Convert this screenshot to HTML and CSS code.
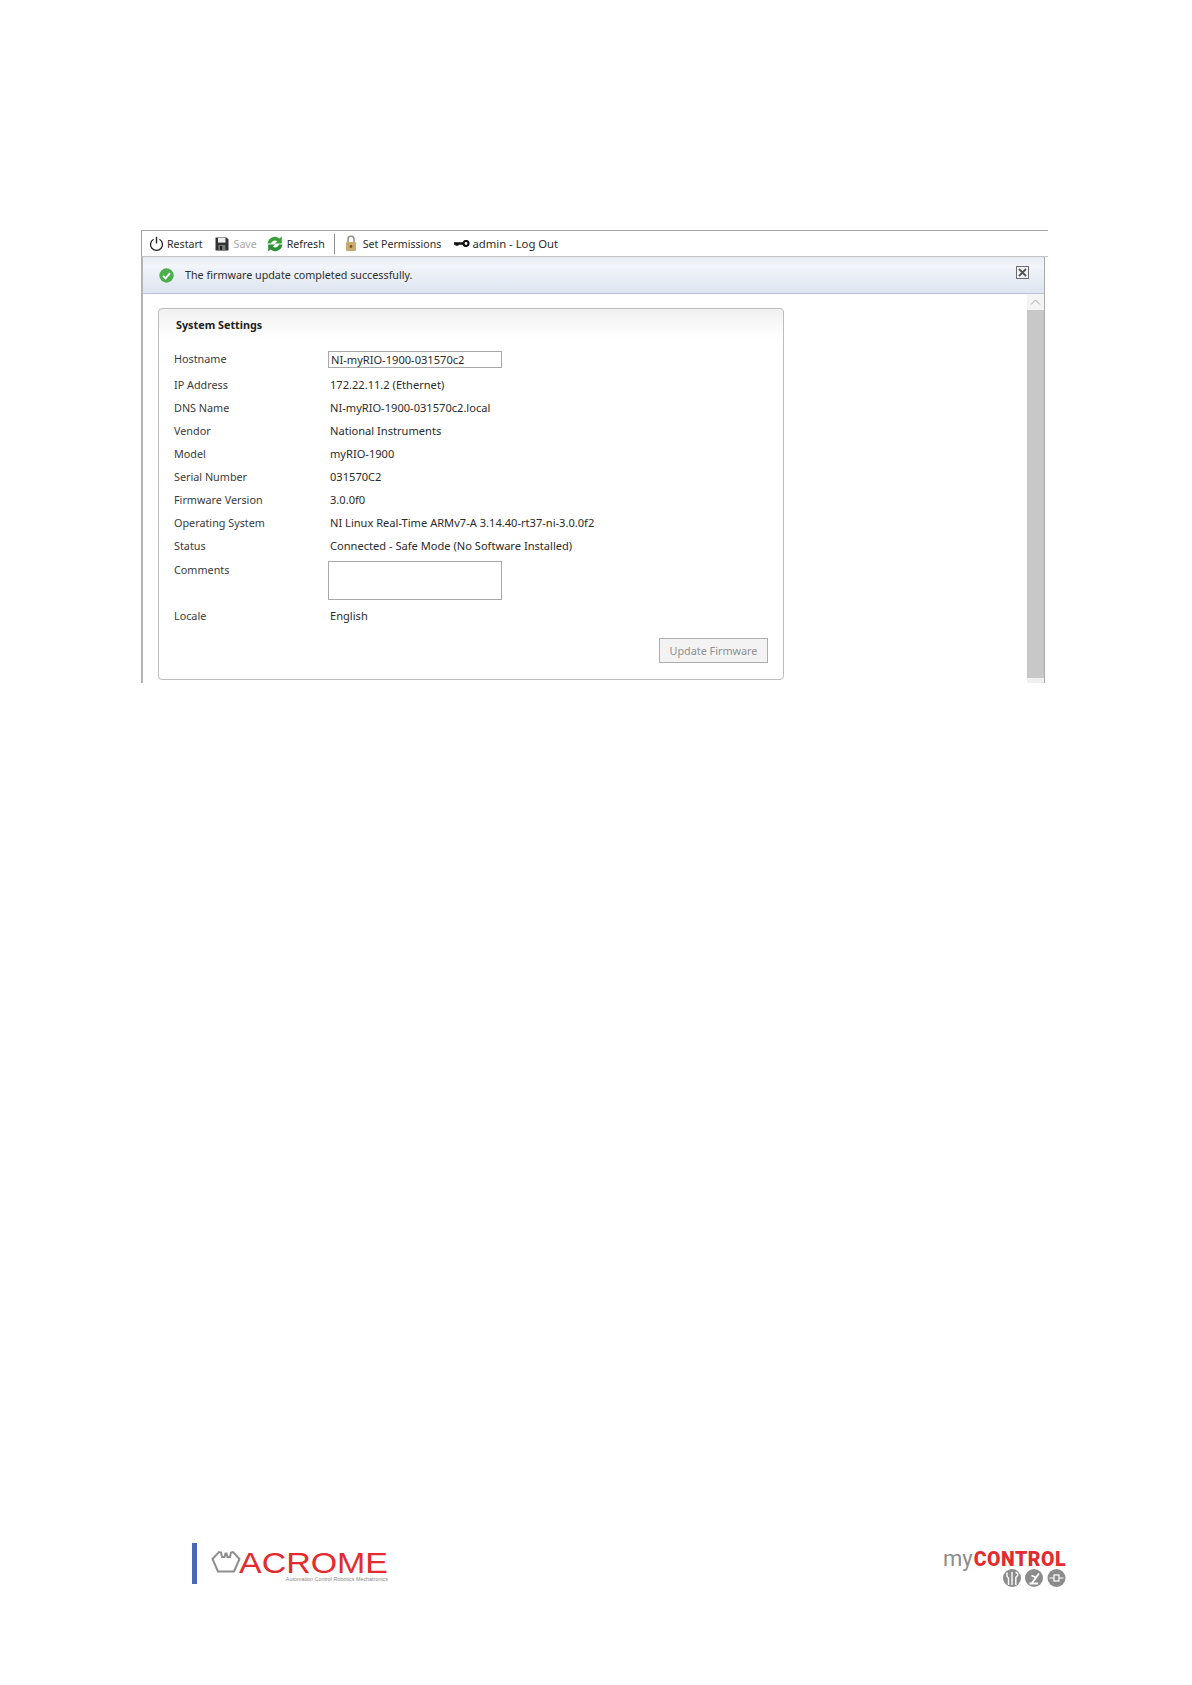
FILE: index.html
```html
<!DOCTYPE html>
<html lang="en">
<head>
<meta charset="utf-8">
<title>System Settings</title>
<link rel="stylesheet" href="styles.css">
</head>
<body>
<div class="page">
  <section class="window">
    <div class="toolbar">
      <span class="tool tool-restart">
        <svg class="icon" width="15" height="16" viewBox="0 0 15 16"><path d="M4.6 3.2A6 6 0 1 0 10.4 3.2" fill="none" stroke="#222" stroke-width="1.3"/><path d="M7.5 0.8V7.4" stroke="#222" stroke-width="1.4"/></svg>
        Restart
      </span>
      <span class="tool tool-save disabled">
        <svg class="icon" width="14" height="14" viewBox="0 0 14 14"><path d="M0.5 0.5H11.5L13.5 2.5V13.5H0.5Z" fill="#333"/><rect x="3" y="1" width="7.5" height="4.6" fill="#eee"/><rect x="3.4" y="8" width="7" height="5.5" fill="#777"/><rect x="5" y="9" width="2" height="4" fill="#222"/></svg>
        Save
      </span>
      <span class="tool tool-refresh">
        <svg class="icon" width="16" height="16" viewBox="0 0 16 16"><path d="M0.6 7.4A7.2 7.2 0 0 1 12.4 2.6L14.8 0.4V7.4H8L10.2 5.2A4 4 0 0 0 4 7.4Z" fill="#3aa13a"/><path d="M15.4 8.6A7.2 7.2 0 0 1 3.6 13.4L1.2 15.6V8.6H8L5.8 10.8A4 4 0 0 0 12 8.6Z" fill="#2c8f35"/></svg>
        Refresh
      </span>
      <span class="separator"></span>
      <span class="tool tool-lock">
        <svg class="icon" width="12" height="17" viewBox="0 0 12 17"><path d="M3 7V4.2a3 3 0 0 1 6 0V7" fill="none" stroke="#8d8d86" stroke-width="1.5"/><rect x="1" y="7" width="10" height="9" rx="1" fill="#c9ab72"/><circle cx="6" cy="11.5" r="1.4" fill="#6d5428"/></svg>
        Set Permissions
      </span>
      <span class="tool tool-user">
        <svg class="icon" width="16" height="7" viewBox="0 0 16 7"><path d="M0 2.2H9V4.8H4.5V5.8H1.5V4.8H0Z" fill="#111"/><circle cx="12" cy="3.5" r="2.5" fill="none" stroke="#111" stroke-width="2.2"/></svg>
        admin - Log Out
      </span>
    </div>
    <div class="body">
      <div class="banner">
        <svg class="check" width="15" height="15" viewBox="0 0 15 15"><circle cx="7.5" cy="7.5" r="7.2" fill="#4cae4c"/><path d="M4 7.8L6.6 10.4L11 5.2" fill="none" stroke="#fff" stroke-width="1.9"/></svg>
        <span class="banner-text">The firmware update completed successfully.</span>
        <svg class="close" width="13" height="13" viewBox="0 0 13 13"><rect x="0.5" y="0.5" width="12" height="12" fill="#f1f3f6" stroke="#6b6b6b"/><path d="M3 3L10 10M10 3L3 10" stroke="#555" stroke-width="1.8"/></svg>
      </div>
      <div class="content">
        <div class="main">
          <div class="panel">
            <h2 class="panel-title">System Settings</h2>
            <div class="rows">
              <div class="row row-host"><span class="label">Hostname</span><span class="input input-host">NI-myRIO-1900-031570c2</span></div>
              <div class="row"><span class="label">IP Address</span><span class="value">172.22.11.2 (Ethernet)</span></div>
              <div class="row"><span class="label">DNS Name</span><span class="value">NI-myRIO-1900-031570c2.local</span></div>
              <div class="row"><span class="label">Vendor</span><span class="value">National Instruments</span></div>
              <div class="row"><span class="label">Model</span><span class="value">myRIO-1900</span></div>
              <div class="row"><span class="label">Serial Number</span><span class="value">031570C2</span></div>
              <div class="row"><span class="label">Firmware Version</span><span class="value">3.0.0f0</span></div>
              <div class="row"><span class="label">Operating System</span><span class="value">NI Linux Real-Time ARMv7-A 3.14.40-rt37-ni-3.0.0f2</span></div>
              <div class="row"><span class="label">Status</span><span class="value">Connected - Safe Mode (No Software Installed)</span></div>
              <div class="row row-comments"><span class="label">Comments</span><span class="input input-comments"></span></div>
              <div class="row"><span class="label">Locale</span><span class="value">English</span></div>
            </div>
            <div class="actions"><span class="button">Update Firmware</span></div>
          </div>
        </div>
        <div class="scrollbar">
          <div class="scroll-up"><svg width="11" height="6" viewBox="0 0 11 6"><path d="M1 5.5L5.5 1L10 5.5" fill="none" stroke="#a8a8a8" stroke-width="1"/></svg></div>
          <div class="scroll-thumb"></div>
          <div class="scroll-down"></div>
        </div>
      </div>
    </div>
  </section>
  <footer class="footer">
    <div class="acrome">
      <span class="acrome-bar"></span>
      <svg class="crown" width="30" height="23" viewBox="0 0 30 23"><path d="M1.5 9L8 2L10 2.5L11 7H13.5L14.5 3.5L15.5 3.5L16.5 7H19L20 2.5L22 2L28.5 9L23 21.5H7Z" fill="none" stroke="#8e8e8e" stroke-width="2"/></svg>
      <div class="acrome-word">
        <span class="acrome-name">ACROME</span>
        <span class="acrome-sub">Automation Control Robotics Mechatronics</span>
      </div>
    </div>
    <div class="mycontrol">
      <div class="mycontrol-word"><span class="my">my</span><span class="control">CONTROL</span></div>
      <div class="badges">
        <svg width="18" height="18" viewBox="0 0 18 18"><circle cx="9" cy="9" r="9" fill="#8c8c8c"/><path d="M4 3.5V7.5L5.5 9V16M9 3V16M12.5 3.5A2 2 0 0 1 14.5 6.5L12.8 8.5V16" fill="none" stroke="#fff" stroke-width="1.4"/></svg>
        <svg width="18" height="18" viewBox="0 0 18 18"><circle cx="9" cy="9" r="9" fill="#8c8c8c"/><path d="M4.5 14.5H13M7 14L11 8.5L6.5 6.5M11 8.5L14 4.5" fill="none" stroke="#fff" stroke-width="1.8"/></svg>
        <svg width="19" height="18" viewBox="0 0 19 18"><circle cx="9.5" cy="9" r="9" fill="#8c8c8c"/><path d="M2.5 9H7M12 9H16.5" stroke="#fff" stroke-width="1.1"/><rect x="7" y="6" width="5" height="6" fill="none" stroke="#fff" stroke-width="1.2"/></svg>
      </div>
    </div>
  </footer>
</div>
</body>
</html>
```
FILE: styles.css
```css
* { box-sizing: border-box; }
html, body { margin: 0; padding: 0; background: #fff; }
body { font-family: "Noto Sans", "Open Sans", sans-serif; font-size: 11px; color: #2b2b2b; }
.page { width: 1192px; height: 1685px; padding-top: 230px; display: flex; flex-direction: column; }

.window { margin-left: 141px; width: 907px; height: 453px; display: flex; flex-direction: column; }
.toolbar { height: 27px; border-top: 1px solid #a3a3a3; border-bottom: 1px solid #c4c4c4; border-left: 1px solid #a3a3a3; display: flex; align-items: center; padding-left: 7px; font-size: 10.6px; }
.tool { display: flex; align-items: center; white-space: nowrap; }
.icon { flex: none; }
.tool-restart .icon { margin-right: 3px; }
.tool-save { margin-left: 12px; }
.tool-save .icon { margin-right: 5px; }
.tool-refresh { margin-left: 10px; }
.tool-refresh .icon { margin-right: 4px; }
.separator { width: 1px; height: 20px; background: #8f8f8f; margin: 0 10px 0 9px; }
.tool-lock .icon { margin-right: 6px; }
.tool-user { margin-left: 13px; font-size: 11.3px; }
.tool-user .icon { margin-right: 2px; }
.disabled { color: #a9a9a9; }

.body { flex: 1; width: 904px; border-left: 2px solid #b4b4b4; border-right: 1px solid #a9a9a9; display: flex; flex-direction: column; min-height: 0; }
.banner { height: 37px; flex: none; border-bottom: 1px solid #b9c4d3; background: linear-gradient(#e6ecf4 0, #f2f5fa 25%, #dde5f0 100%); display: flex; align-items: center; padding: 0 15px 3px 16px; }
.check { flex: none; margin-top: 3px; }
.banner-text { margin: 2px 0 0 11px; color: #2e2e2e; font-size: 10.75px; }
.close { flex: none; margin-left: auto; margin-top: -3px; }

.content { flex: 1; display: flex; min-height: 0; }
.main { flex: 1; padding: 14px 0 0 15px; }
.panel { width: 626px; height: 372px; border: 1px solid #bdbdbd; border-radius: 4px; background: linear-gradient(#f1f1f1 0, #fff 30px); display: flex; flex-direction: column; }
.panel-title { margin: 0; height: 38px; padding: 0 0 0 17px; font-size: 10.8px; line-height: 31px; font-weight: 700; color: #222; }
.rows { padding-left: 15px; }
.row { display: grid; grid-template-columns: 156px 1fr; height: 23px; line-height: 23px; }
.row-host { height: 26px; }
.row-comments { height: 47px; line-height: 25px; }
.label { color: #3a3a3a; font-size: 10.8px; }
.value { color: #2b2b2b; font-size: 11.1px; }
.input { display: block; width: 174px; margin-left: -2px; border: 1px solid #a8a8a8; background: #fff; }
.input-host { height: 17px; margin-top: 4px; line-height: 15px; padding-left: 2px; font-size: 11.1px; }
.input-comments { height: 39px; margin-top: 4px; }
.actions { display: flex; justify-content: flex-end; padding: 11px 15px 0 0; }
.button { width: 109px; height: 25px; border: 1px solid #adadad; background: #f3f3f3; color: #8f8f8f; text-align: center; line-height: 24px; font-size: 10.8px; }

.scrollbar { width: 17px; flex: none; background: #f0f0f0; display: flex; flex-direction: column; }
.scroll-up { height: 16px; background: #f4f4f4; display: flex; align-items: center; justify-content: center; }
.scroll-thumb { flex: 1; background: #c8c8c8; }
.scroll-down { height: 5px; background: #f0f0f0; }

.footer { margin-top: auto; height: 142px; padding: 0 126px 0 192px; display: flex; justify-content: space-between; }
.acrome { display: flex; height: 42px; }
.acrome-bar { width: 5px; height: 41px; background: #4a6ab5; }
.crown { margin: 7px 0 0 14px; flex: none; }
.acrome-word { width: 149px; margin: 8px 0 0 -2px; display: flex; flex-direction: column; }
.acrome-name { font-family: "Liberation Sans", sans-serif; font-size: 29px; line-height: 25px; color: #e32b30; transform: scaleX(1.17); transform-origin: left center; white-space: nowrap; }
.acrome-sub { font-family: "Liberation Sans", sans-serif; font-size: 5.4px; line-height: 6px; color: #8a8a8a; text-align: right; white-space: nowrap; }
.mycontrol { display: flex; flex-direction: column; align-items: flex-end; margin-top: 6px; }
.mycontrol-word { font-family: "Roboto", sans-serif; line-height: 20px; white-space: nowrap; }
.my { font-size: 22px; color: #8c8c8c; margin-right: 1px; }
.control { font-size: 19.5px; font-weight: 900; color: #e32b30; letter-spacing: 0.5px; }
.badges { display: flex; gap: 4px; margin-top: -4px; }
```
